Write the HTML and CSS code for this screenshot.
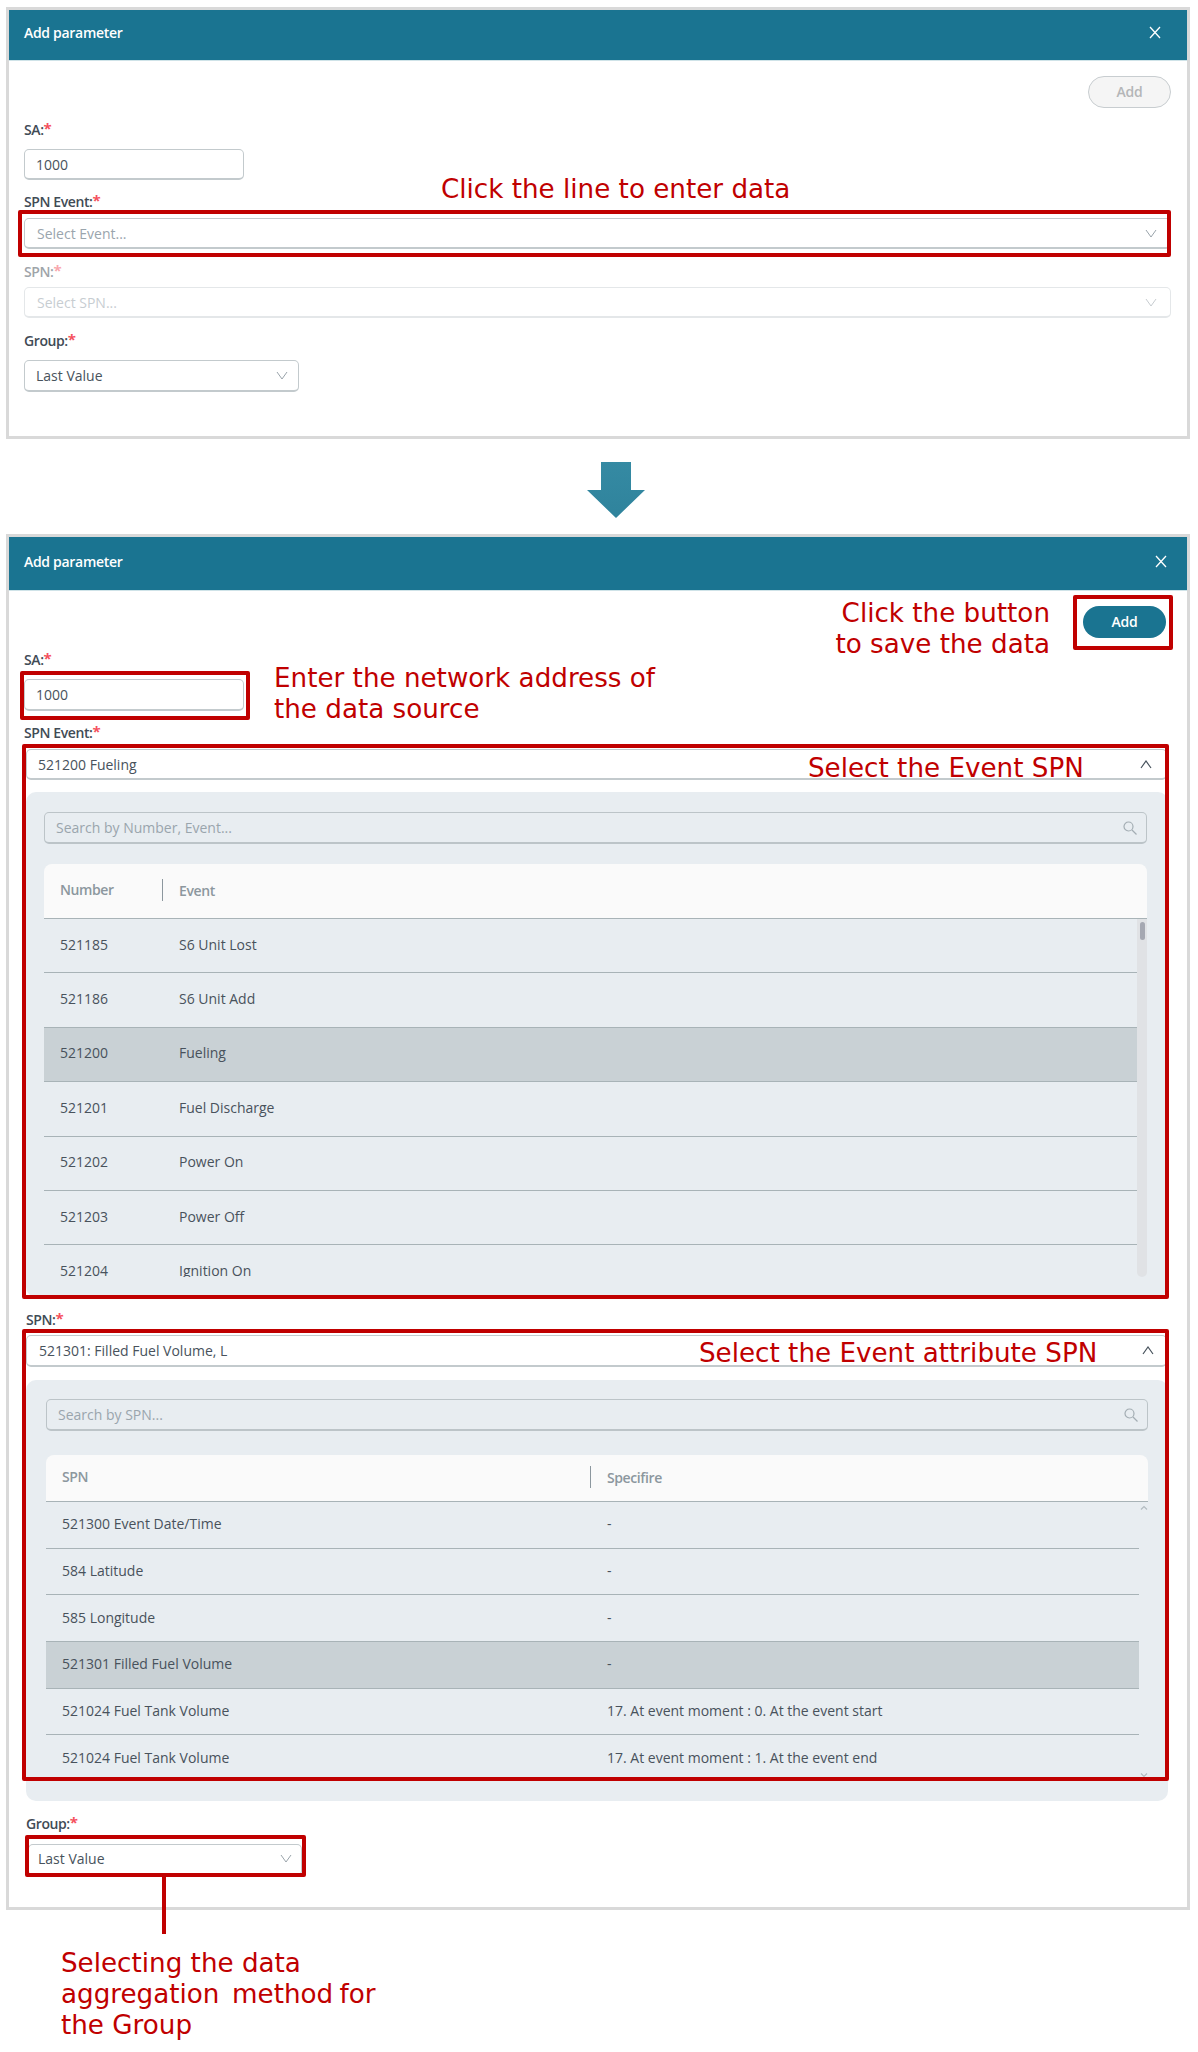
FILE: index.html
```html
<!DOCTYPE html>
<html lang="en">
<head>
    <meta charset="UTF-8">
    <title>Add parameter</title>
    <link rel="stylesheet" href="styles.css">
</head>
<body>
    <div class="sheet">
        <!-- step 1: empty form -->
        <div class="panel panel-first">
            <div class="panel-head">
                <span class="panel-title">Add parameter</span>
                <svg class="close" viewBox="0 0 12 13"><path d="M1 1l10 11M11 1L1 12"/></svg>
            </div>
            <div class="panel-body">
                <div class="actions"><button class="btn btn-off">Add</button></div>
                <label class="lbl lbl-sa">SA:<i>*</i></label>
                <div class="inp inp-sa">1000</div>
                <label class="lbl lbl-event">SPN Event:<i>*</i></label>
                <div class="sel sel-event">
                    <span class="ph">Select Event...</span>
                    <svg class="chev" viewBox="0 0 12 9"><path d="M1 1l5 7 5-7"/></svg>
                </div>
                <label class="lbl lbl-spn lbl-off">SPN:<i>*</i></label>
                <div class="sel sel-spn sel-off">
                    <span class="ph">Select SPN...</span>
                    <svg class="chev" viewBox="0 0 12 9"><path d="M1 1l5 7 5-7"/></svg>
                </div>
                <label class="lbl lbl-group">Group:<i>*</i></label>
                <div class="sel sel-group">
                    <span>Last Value</span>
                    <svg class="chev" viewBox="0 0 12 9"><path d="M1 1l5 7 5-7"/></svg>
                </div>
            </div>
        </div>

        <svg class="down-arrow" viewBox="0 0 60 56">
            <defs>
                <linearGradient id="arrowFill" x1="0" y1="0" x2="0" y2="1">
                    <stop offset="0" stop-color="#358aa3"/>
                    <stop offset="1" stop-color="#2f839c"/>
                </linearGradient>
            </defs>
            <path d="M15 0h30v28h14L30 56 1 28h14z" fill="url(#arrowFill)"/>
        </svg>

        <!-- step 2: filled form -->
        <div class="panel panel-second">
            <div class="panel-head panel-head-tall">
                <span class="panel-title">Add parameter</span>
                <svg class="close close-second" viewBox="0 0 12 13"><path d="M1 1l10 11M11 1L1 12"/></svg>
            </div>
            <div class="panel-body">
                <div class="actions actions-second"><button class="btn btn-on">Add</button></div>
                <label class="lbl lbl-sa2">SA:<i>*</i></label>
                <div class="inp inp-sa2">1000</div>
                <label class="lbl lbl-event2">SPN Event:<i>*</i></label>
                <div class="sel sel-open sel-event2">
                    <span>521200 Fueling</span>
                    <svg class="chev chev-up" viewBox="0 0 12 9"><path d="M1 8l5-7 5 7"/></svg>
                </div>
                <div class="dd dd-event">
                    <div class="search">
                        <span class="ph">Search by Number, Event...</span>
                        <svg class="glass" viewBox="0 0 14 14"><circle cx="5.5" cy="5.5" r="4.5"/><path d="M9 9l4.5 4.5"/></svg>
                    </div>
                    <div class="thead thead-event">
                        <span class="th">Number</span>
                        <span class="th-next">Event</span>
                    </div>
                    <div class="list list-event">
                        <div class="rows">
                            <div class="row"><span>521185</span><span>S6 Unit Lost</span></div>
                            <div class="row"><span>521186</span><span>S6 Unit Add</span></div>
                            <div class="row row-on"><span>521200</span><span>Fueling</span></div>
                            <div class="row"><span>521201</span><span>Fuel Discharge</span></div>
                            <div class="row"><span>521202</span><span>Power On</span></div>
                            <div class="row"><span>521203</span><span>Power Off</span></div>
                            <div class="row"><span>521204</span><span>Ignition On</span></div>
                        </div>
                        <div class="track"><div class="thumb"></div></div>
                    </div>
                </div>
                <label class="lbl lbl-spn2">SPN:<i>*</i></label>
                <div class="sel sel-open sel-spn2">
                    <span>521301: Filled Fuel Volume, L</span>
                    <svg class="chev chev-up" viewBox="0 0 12 9"><path d="M1 8l5-7 5 7"/></svg>
                </div>
                <div class="dd dd-spn">
                    <div class="search">
                        <span class="ph">Search by SPN...</span>
                        <svg class="glass" viewBox="0 0 14 14"><circle cx="5.5" cy="5.5" r="4.5"/><path d="M9 9l4.5 4.5"/></svg>
                    </div>
                    <div class="thead thead-spn">
                        <span class="th">SPN</span>
                        <span class="th-next">Specifire</span>
                    </div>
                    <div class="list list-spn">
                        <div class="rows">
                            <div class="row"><span>521300 Event Date/Time</span><span>-</span></div>
                            <div class="row"><span>584 Latitude</span><span>-</span></div>
                            <div class="row"><span>585 Longitude</span><span>-</span></div>
                            <div class="row row-on"><span>521301 Filled Fuel Volume</span><span>-</span></div>
                            <div class="row"><span>521024 Fuel Tank Volume</span><span>17. At event moment : 0. At the event start</span></div>
                            <div class="row"><span>521024 Fuel Tank Volume</span><span>17. At event moment : 1. At the event end</span></div>
                        </div>
                        <div class="arrows">
                            <svg viewBox="0 0 8 5"><path d="M1 4.5l3-3 3 3"/></svg>
                            <svg viewBox="0 0 8 5"><path d="M1 .5l3 3 3-3"/></svg>
                        </div>
                    </div>
                </div>
                <label class="lbl lbl-group2">Group:<i>*</i></label>
                <div class="sel sel-group sel-group2">
                    <span>Last Value</span>
                    <svg class="chev" viewBox="0 0 12 9"><path d="M1 1l5 7 5-7"/></svg>
                </div>
            </div>
        </div>

        <p class="note-bottom">Selecting the data
<span class="tight">aggregation  method for</span>
the Group</p>
    </div>

    <!-- red annotations on top of the screenshots -->
    <div class="mark mark-event"></div>
    <div class="mark mark-add"></div>
    <div class="mark mark-sa"></div>
    <div class="mark mark-event2"></div>
    <div class="mark mark-spn2"></div>
    <div class="mark mark-group2"></div>
    <div class="mark-line"></div>
    <p class="note note-line">Click the line to enter data</p>
    <p class="note note-add">Click the button
to save the data</p>
    <p class="note note-sa">Enter the network address of
the data source</p>
    <p class="note note-event">Select the Event SPN</p>
    <p class="note note-attr">Select the Event attribute SPN</p>
</body>
</html>
```

FILE: styles.css
```css
body {
    margin: 0;
    background: #fff;
    font-family: 'Open Sans', sans-serif;
    font-size: 14px;
    color: #48525c;
    overflow: hidden;
}

.sheet {
    width: 1184px;
    margin: 7px 0 0 6px;
}

.panel {
    box-sizing: border-box;
    border: 3px solid #d9d9d9;
    background: #fff;
}

.panel-first {
    height: 432px;
}

.panel-head {
    display: flex;
    justify-content: space-between;
    align-items: center;
    height: 50px;
    padding: 0 26px 6px 15px;
    box-sizing: border-box;
    background: #1a7491;
    box-shadow: 0 1px 0 #cfe3e8;
}

.panel-head-tall {
    height: 53px;
    padding: 0 20px 4px 15px;
}

.panel-title {
    color: #fff;
    font-size: 14px;
    font-weight: 600;
    letter-spacing: -0.3px;
}

.close {
    width: 12px;
    height: 13px;
    fill: none;
    stroke: #fff;
    stroke-width: 1.3;
}

.panel-body {
    padding: 16px 16px 31px 15px;
}

.actions {
    display: flex;
    justify-content: flex-end;
}

.actions-second {
    margin-right: 5px;
}

.btn {
    width: 83px;
    height: 32px;
    padding: 0 0 2px;
    border-radius: 16px;
    font-family: 'Open Sans', sans-serif;
    font-size: 14px;
    font-weight: 600;
    letter-spacing: -0.3px;
}

.btn-off {
    background: #f5f5f5;
    border: 1px solid #c8cdd0;
    color: #b4b6b8;
}

.btn-on {
    background: #1a7491;
    border: none;
    color: #fff;
}

.lbl {
    display: block;
    height: 20px;
    line-height: 20px;
    font-weight: 600;
    color: #414b55;
    letter-spacing: -0.4px;
}

.lbl i {
    color: #f5515e;
    font-style: normal;
    font-weight: 700;
    font-size: 15px;
    line-height: 0;
    position: relative;
    top: -1px;
}

.lbl-off {
    opacity: 0.5;
}

.lbl-sa { margin-top: 12px; }
.lbl-event { margin-top: 12px; }
.lbl-spn { margin-top: 13px; }
.lbl-group { margin-top: 13px; }
.lbl-sa2 { margin-top: 12px; }
.lbl-event2 { margin-top: 12px; }
.lbl-spn2 { margin-top: 13px; margin-left: 2px; }
.lbl-group2 { margin-top: 13px; margin-left: 2px; }

.inp,
.sel,
.search {
    display: flex;
    align-items: center;
    box-sizing: border-box;
    height: 31px;
    border: 1px solid #c3cacd;
    border-bottom-width: 2px;
    border-radius: 5px;
    background: #fff;
}

.inp {
    padding-left: 11px;
    width: 220px;
}

.inp-sa { margin-top: 9px; }
.inp-sa2 { margin-top: 9px; height: 32px; }

.sel {
    justify-content: space-between;
    padding: 0 13px 0 12px;
}

.sel-event { margin-top: 6px; }
.sel-spn { margin-top: 5px; }
.sel-off { border-color: #e4e7e9; }
.sel-off .ph { opacity: 0.55; }
.sel-off .chev { opacity: 0.55; }

.sel-group {
    width: 275px;
    height: 32px;
    margin-top: 9px;
    padding: 0 10px 0 11px;
}

.sel-group2 {
    width: 274px;
    margin: 10px 0 0 4px;
    padding: 0 9px 2px 9px;
}

.sel-open {
    margin: 6px 4px 0 2px;
}

.sel-event2 {
    padding: 0 14px 0 11px;
}

.sel-spn2 {
    height: 32px;
    margin-top: 5px;
    padding-right: 12px;
}

.ph {
    color: #9aa5ad;
}

.chev {
    width: 12px;
    height: 9px;
    fill: none;
    stroke: #9aa4ab;
    stroke-width: 1;
}

.chev-up {
    stroke: #47525c;
    stroke-width: 1.2;
}

.dd {
    box-sizing: border-box;
    margin: 12px 3px 0 2px;
    border-radius: 10px;
    background: #e8edf1;
}

.dd-event {
    padding: 20px 21px 20px 18px;
}

.dd-spn {
    margin-top: 13px;
    padding: 19px 20px 23px 20px;
}

.search {
    justify-content: space-between;
    height: 32px;
    padding: 0 9px 0 11px;
    background: transparent;
    border-color: #bcc4c8;
}

.glass {
    width: 14px;
    height: 14px;
    fill: none;
    stroke: #a3adb3;
    stroke-width: 1.2;
}

.thead {
    display: grid;
    align-items: center;
    box-sizing: border-box;
    margin-top: 20px;
    padding: 0 0 2px 16px;
    background: #fafafa;
    border-radius: 8px 8px 0 0;
    border-bottom: 1px solid #a8b3b7;
    font-weight: 600;
    color: #8c979e;
    letter-spacing: -0.4px;
}

.thead-event {
    height: 55px;
    grid-template-columns: 103px 1fr;
    column-gap: 16px;
}

.thead-spn {
    height: 47px;
    margin-top: 24px;
    grid-template-columns: 529px 1fr;
    column-gap: 16px;
}

.th {
    height: 22px;
    line-height: 22px;
    border-right: 1px solid #8c979e;
}

.list {
    display: flex;
    overflow: hidden;
}

.list-event { height: 358px; }
.list-spn { height: 276px; }

.rows {
    flex: 1;
}

.row {
    display: grid;
    align-items: center;
    box-sizing: border-box;
    padding-left: 16px;
    padding-bottom: 3px;
    column-gap: 16px;
    border-bottom: 1px solid #a8b3b7;
}

.list-event .row {
    height: 54.4px;
    grid-template-columns: 103px 1fr;
}

.list-spn .row {
    height: 46.7px;
    padding-bottom: 2px;
    grid-template-columns: 529px 1fr;
}

.row-on {
    background: #c9d1d5;
}

.track {
    width: 10px;
    background: #e0e2e5;
    border-radius: 0 0 5px 5px;
}

.thumb {
    width: 5px;
    height: 18px;
    margin: 3px auto 0;
    border-radius: 3px;
    background: #a5a8b2;
}

.arrows {
    display: flex;
    flex-direction: column;
    justify-content: space-between;
    align-items: center;
    width: 9px;
    padding: 3px 0 0;
}

.arrows svg {
    width: 8px;
    height: 5px;
    fill: none;
    stroke: #b3bcc1;
    stroke-width: 1.2;
}

.down-arrow {
    display: block;
    width: 60px;
    height: 56px;
    margin: 23px 0 16px 580px;
}

.note-bottom {
    margin: 38px 0 0 55px;
}

.tight {
    word-spacing: -2px;
}

.note,
.note-bottom {
    font-family: 'DejaVu Sans', sans-serif;
    font-size: 26.2px;
    line-height: 31px;
    color: #c00000;
    white-space: pre;
}

/* annotations lie over the form, at their place in the picture */
.note {
    position: absolute;
    margin: 0;
}

.note-line { left: 441px; top: 174px; }
.note-add { right: 148px; top: 598px; text-align: right; }
.note-sa { left: 274px; top: 663px; }
.note-event { left: 808px; top: 753px; }
.note-attr { left: 699px; top: 1338px; }

.mark {
    position: absolute;
    box-sizing: border-box;
    border: 4px solid #c00000;
    border-radius: 2px;
}

.mark-event { left: 18px; top: 210px; width: 1153px; height: 47px; }
.mark-add { left: 1073px; top: 595px; width: 100px; height: 55px; }
.mark-sa { left: 20px; top: 671px; width: 230px; height: 49px; }
.mark-event2 { left: 22px; top: 744px; width: 1147px; height: 555px; }
.mark-spn2 { left: 22px; top: 1329px; width: 1147px; height: 452px; }
.mark-group2 { left: 25px; top: 1835px; width: 281px; height: 42px; }

.mark-line {
    position: absolute;
    left: 162px;
    top: 1877px;
    width: 4px;
    height: 57px;
    background: #c00000;
}
```
